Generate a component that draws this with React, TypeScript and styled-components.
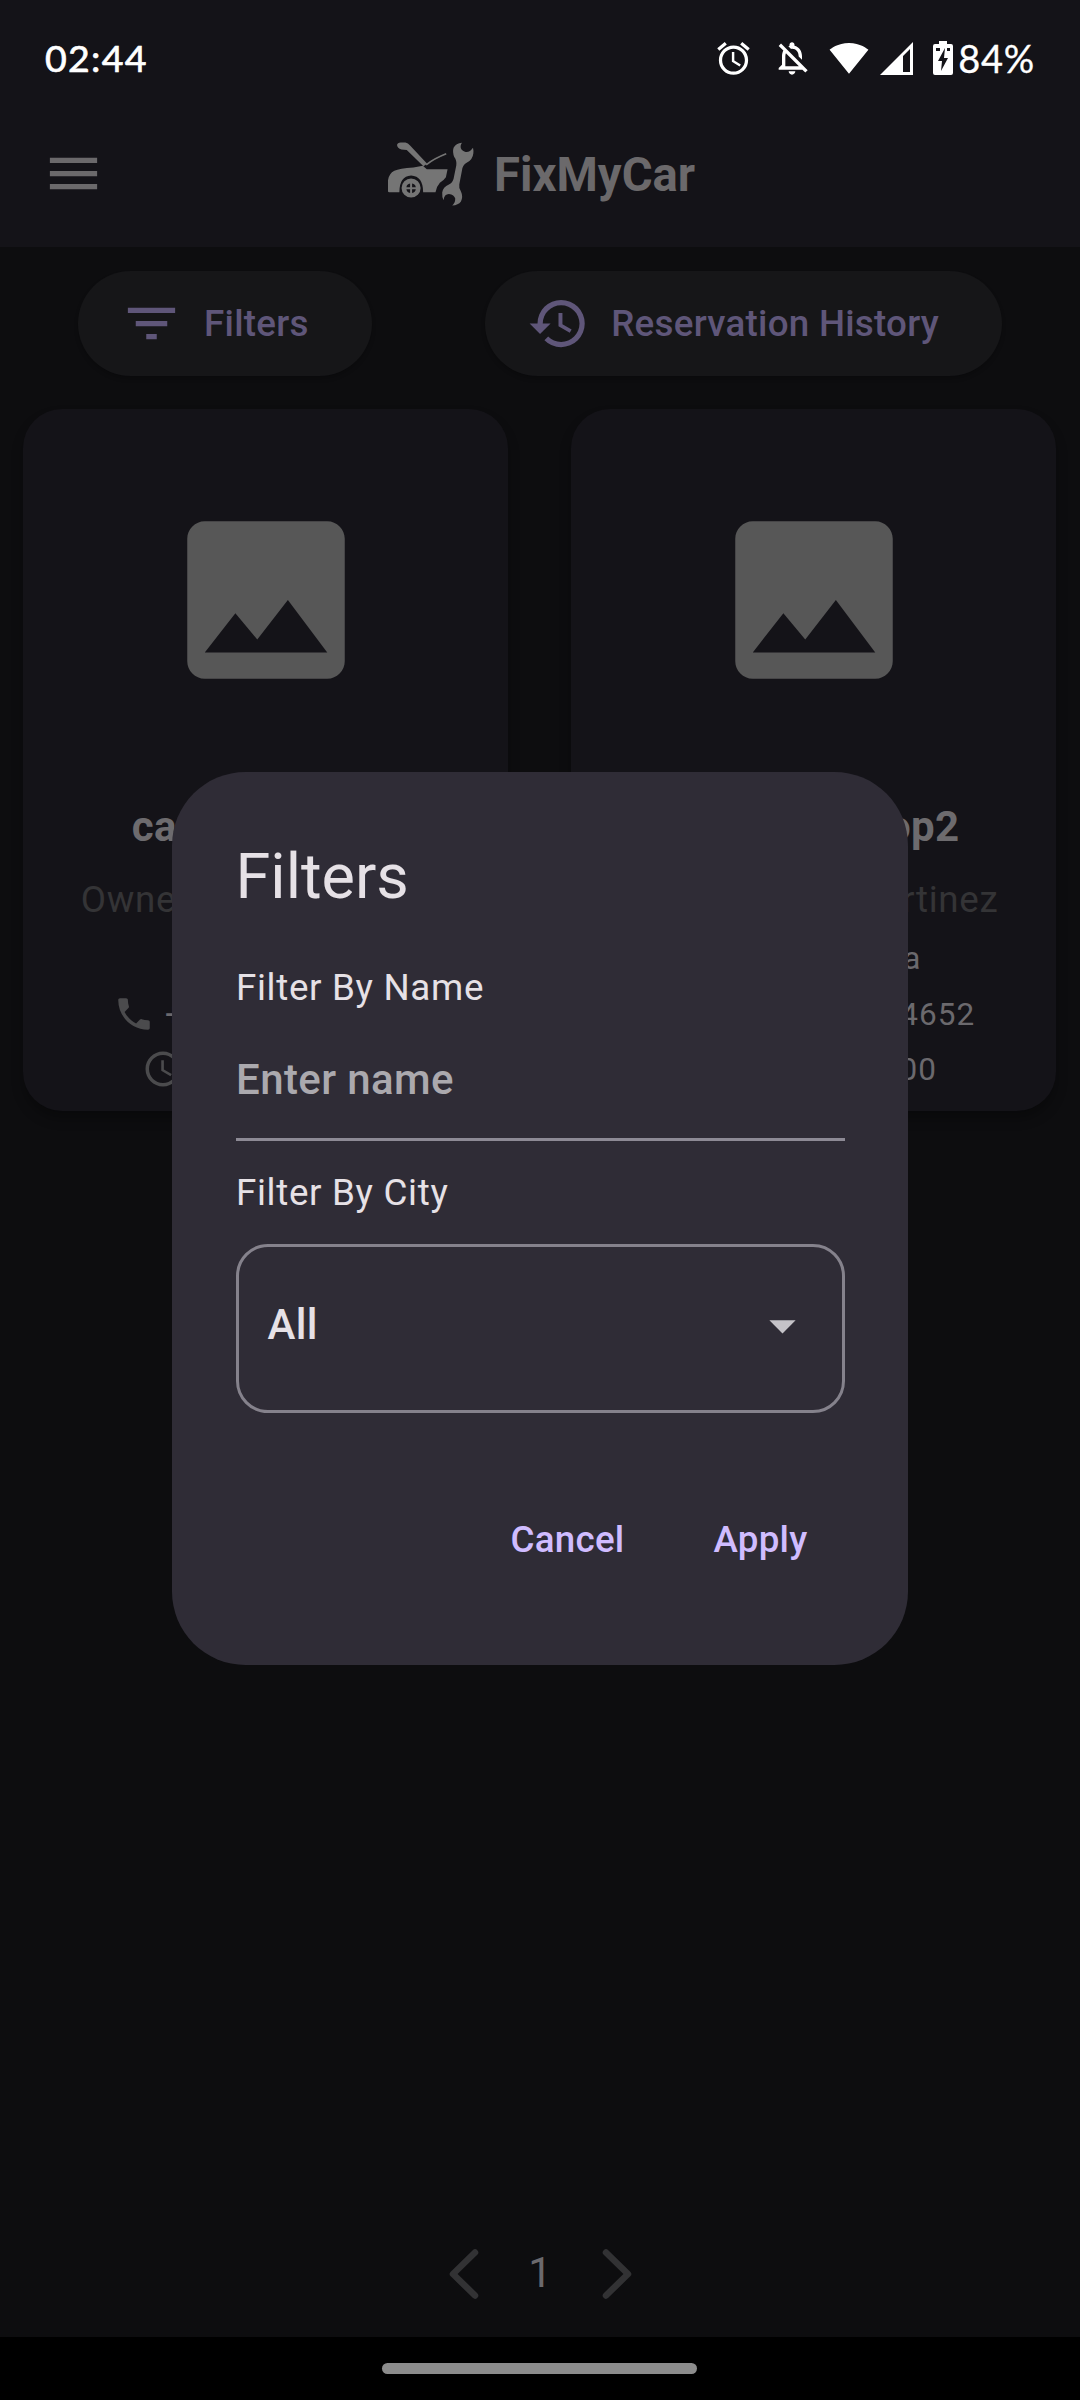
import React from "react";
import styled, { createGlobalStyle } from "styled-components";
import {
  MdAccessAlarm,
  MdAccessTime,
  MdArrowDropDown,
  MdFilterList,
  MdHistory,
  MdImage,
  MdLocationOn,
  MdMenu,
  MdOutlineNotificationsOff,
  MdPhone,
  MdSignalWifi4Bar,
} from "react-icons/md";

const GlobalStyle = createGlobalStyle`
  * { box-sizing: border-box; }
  body { margin: 0; background: #0d0d0f; }
  button { border: 0; background: none; font: inherit; margin: 0; }
`;

const Screen = styled.div`
  position: relative;
  display: flex;
  flex-direction: column;
  width: 1080px;
  height: 2400px;
  overflow: hidden;
  background: #0d0d0f;
  color: #e6e1e6;
  font-family: Roboto, "Liberation Sans", sans-serif;
  white-space: nowrap;
`;

const Header = styled.header`
  height: 247px;
  background: #141318;
`;

const StatusBar = styled.div`
  display: flex;
  align-items: center;
  justify-content: space-between;
  height: 100px;
  padding: 16px 45px 0 45px;
  color: #fff;
  font-family: Lato, "Open Sans", sans-serif;
  font-size: 37.5px;
  line-height: 44px;
`;

const Clock = styled.span`
  font-weight: 400;
  letter-spacing: 1.3px;
  -webkit-text-stroke: 0.7px #fff;
`;

const BatteryLevel = styled.span`
  font-size: 38px;
  letter-spacing: 0.7px;
  -webkit-text-stroke: 0.3px #fff;
`;

const StatusIcons = styled.div`
  display: flex;
  align-items: center;
  svg { display: block; }
`;

const StatusGap = styled.span<{ $w: number }>`
  width: ${(p) => p.$w}px;
`;

const AppBar = styled.div`
  display: grid;
  grid-template-columns: 346px auto 1fr;
  align-items: center;
  height: 147px;
  padding-left: 42px;
  color: #6b696b;
`;

const Brand = styled.div`
  display: flex;
  align-items: center;
  gap: 20px;
  height: 147px;
`;

const BrandName = styled.h1`
  margin: 3px 0 0;
  font-size: 47.25px;
  line-height: 60px;
  font-weight: 700;
`;

const Toolbar = styled.div`
  display: flex;
  gap: 113.6px;
  padding: 24px 78px 0;
`;

const Pill = styled.button`
  display: flex;
  align-items: center;
  gap: 21px;
  height: 105px;
  padding: 0 63px 0 42px;
  border-radius: 53px;
  background: #161618;
  box-shadow: 0 3px 4px rgba(0, 0, 0, 0.2);
  color: #5f5679;
  font-size: 36.75px;
  font-weight: 500;
  letter-spacing: 0.26px;
`;

const Cards = styled.main`
  display: grid;
  grid-template-columns: 485px 485px;
  gap: 63px;
  padding: 33px 0 0 23px;
`;

const Card = styled.article`
  display: flex;
  flex-direction: column;
  align-items: center;
  height: 702px;
  padding-top: 86px;
  border-radius: 39px;
  background: #141318;
  box-shadow: 0 8px 12px rgba(0, 0, 0, 0.28);
  color: #575757;
`;

const ShopName = styled.h2`
  margin: 90px 0 0;
  color: #6d6b6e;
  font-size: 42px;
  line-height: 63px;
  font-weight: 700;
  letter-spacing: 0.4px;
`;

const Owner = styled.p`
  margin: 15px 0 11px;
  color: #343436;
  font-size: 36.75px;
  line-height: 53px;
  letter-spacing: 0.66px;
`;

const Info = styled.div`
  display: flex;
  align-items: center;
  gap: 10px;
  height: 43px;
  margin-bottom: 12.5px;
  color: #6b696d;
  font-size: 31.5px;
  line-height: 43px;
  letter-spacing: 1.05px;
  svg { color: #4b4b4d; margin-bottom: 1px; }
`;

const Pager = styled.nav`
  display: flex;
  align-items: center;
  justify-content: center;
  gap: 48px;
  height: 126px;
  margin-top: auto;
  color: #6b696d;
  font-size: 42px;
  line-height: 52px;
`;

const PageNumber = styled.span`
  margin-bottom: 3px;
  width: 27px;
  text-align: center;
`;

const NavBar = styled.footer`
  display: flex;
  justify-content: center;
  height: 63px;
  padding: 26px 1px 0 0;
  background: #000;
`;

const NavHandle = styled.div`
  width: 315px;
  height: 11px;
  border-radius: 6px;
  background: #8c8c8c;
`;

const Dialog = styled.section`
  position: absolute;
  top: 772px;
  left: 172px;
  width: 736px;
  height: 893px;
  padding: 63px 63px 72px 64px;
  border-radius: 73.5px;
  background: #2f2c36;
`;

const DialogTitle = styled.h2`
  margin: 0 0 42px -0.5px;
  font-size: 63px;
  line-height: 84px;
  font-weight: 400;
`;

const FieldLabel = styled.label`
  display: block;
  font-size: 36.75px;
  line-height: 53px;
  letter-spacing: 0.68px;
`;

const NameField = styled.div`
  height: 127px;
  margin-bottom: 25px;
  padding: 39px 0 0;
  border-bottom: 3px solid #8d8a95;
  color: #aba9ae;
  font-size: 42px;
  line-height: 53px;
  font-weight: 500;
  letter-spacing: 0.4px;
`;

const CitySelect = styled.div`
  display: flex;
  align-items: center;
  justify-content: space-between;
  height: 169px;
  margin-top: 25px;
  padding: 0 28px 7px 28.5px;
  border: 3px solid #85828c;
  border-radius: 32px;
  font-size: 42px;
  line-height: 53px;
  font-weight: 500;
  letter-spacing: 0.4px;
  svg { color: #c5c3c8; }
`;

const CityValue = styled.span`
  padding-bottom: 2px;
`;

const Actions = styled.div`
  display: flex;
  justify-content: flex-end;
  gap: 26px;
  margin-top: 74px;
  padding-right: 6px;
`;

const ActionButton = styled.button`
  height: 105px;
  padding: 0 31.5px;
  color: #d0bcff;
  font-size: 36.75px;
  font-weight: 500;
  letter-spacing: 0.26px;
`;

const BrandLogo = () => (
  <svg width="86" height="64" viewBox="84 95 257 191" fill="#757575">
    <path d="M111 104Q112 96 122 96L136 96Q144 98 150 105L201 160L190 167L140 119L124 117Q112 114 111 104Z" />
    <path d="M198 163Q222 144 258 130" fill="none" stroke="#757575" strokeWidth="5" />
    <path d="M84 242V209Q87 189 103 181Q118 174 160 171L188 166L200 176H262L257 200Q250 210 239 217Q229 228 226 245H189Q189 197 153 195Q118 197 118 245H88Q84 245 84 242Z" />
    <path
      fillRule="evenodd"
      d="M153 204a28.500 28.500 0 1 1 0 57a28.500 28.500 0 1 1 0-57ZM150 219q-10 2-11 11h11ZM156 219v11h11q-1-9-11-11ZM139 236q1 9 11 11v-11ZM156 236v11q10-2 11-11Z"
    />
    <path d="M305 97Q287 99 280 112Q276 124 282 140Q290 150 288 165L280 205Q277 217 266 222Q248 230 246 246Q245 260 250 269Q252 250 266 250Q282 252 285 264Q285 277 276 285Q294 284 302 273Q309 258 302 243Q295 234 297 222L305 180Q307 163 319 157Q337 148 339 129Q340 120 338 112Q328 127 314 124Q300 120 301 107Q302 101 305 97Z" />
  </svg>
);

const SignalIcon = () => (
  <svg width="33" height="33" viewBox="0 0 33 33">
    <path fill="#fff" fillRule="evenodd" d="M33 0V33H0ZM23 14V30H30V7Z" />
  </svg>
);

const BatteryIcon = () => (
  <svg width="20" height="34" viewBox="0 0 20 34">
    <path
      fill="#fff"
      fillRule="evenodd"
      d="M6 0h8v3h4q2 0 2 2v27q0 2-2 2H2q-2 0-2-2V5q0-2 2-2h4ZM12 7L5 20h4l-1 10L15 17h-4ZM3 7v3h4V7ZM14 7v3h3V7Z"
    />
  </svg>
);

const Chevron = ({ flip }: { flip?: boolean }) => (
  <svg width="30" height="52" viewBox="0 0 30 52">
    <path
      d={flip ? "M4 4.500L26 26L4 47.500" : "M26 4.500L4 26L26 47.500"}
      fill="none"
      stroke="#323234"
      strokeWidth="6.500"
      strokeLinecap="round"
      strokeLinejoin="round"
    />
  </svg>
);

type Shop = { name: string; owner: string; city: string; phone: string; hours: string };

const shops: Shop[] = [
  { name: "carrepairshop", owner: "Owner: Jose Martinez", city: "Mostar", phone: "+387 612344465", hours: "08:00 - 16:00" },
  { name: "carrepairshop2", owner: "Owner: Jose Martinez", city: "Banja Luka", phone: "+387 6123444652", hours: "08:00 - 16:00" },
];

export default function App() {
  return (
    <Screen>
      <GlobalStyle />
      <Header>
        <StatusBar>
          <Clock>02:44</Clock>
          <StatusIcons>
            <MdAccessAlarm size={39} />
            <StatusGap $w={19} />
            <MdOutlineNotificationsOff size={40} />
            <StatusGap $w={17} />
            <MdSignalWifi4Bar size={40} />
            <StatusGap $w={11} />
            <SignalIcon />
            <StatusGap $w={20} />
            <BatteryIcon />
            <StatusGap $w={5} />
            <BatteryLevel>84%</BatteryLevel>
          </StatusIcons>
        </StatusBar>
        <AppBar>
          <MdMenu size={63} />
          <Brand>
            <BrandLogo />
            <BrandName>FixMyCar</BrandName>
          </Brand>
        </AppBar>
      </Header>

      <Toolbar>
        <Pill>
          <MdFilterList size={63} />
          Filters
        </Pill>
        <Pill>
          <MdHistory size={63} />
          Reservation History
        </Pill>
      </Toolbar>

      <Cards>
        {shops.map((shop) => (
          <Card key={shop.name}>
            <MdImage size={210} />
            <ShopName>{shop.name}</ShopName>
            <Owner>{shop.owner}</Owner>
            <Info>
              <MdLocationOn size={42} />
              {shop.city}
            </Info>
            <Info>
              <MdPhone size={42} />
              {shop.phone}
            </Info>
            <Info>
              <MdAccessTime size={42} />
              {shop.hours}
            </Info>
          </Card>
        ))}
      </Cards>

      <Pager>
        <Chevron />
        <PageNumber>1</PageNumber>
        <Chevron flip />
      </Pager>
      <NavBar>
        <NavHandle />
      </NavBar>

      <Dialog>
        <DialogTitle>Filters</DialogTitle>
        <FieldLabel>Filter By Name</FieldLabel>
        <NameField>Enter name</NameField>
        <FieldLabel>Filter By City</FieldLabel>
        <CitySelect>
          <CityValue>All</CityValue>
          <MdArrowDropDown size={63} />
        </CitySelect>
        <Actions>
          <ActionButton>Cancel</ActionButton>
          <ActionButton>Apply</ActionButton>
        </Actions>
      </Dialog>
    </Screen>
  );
}
